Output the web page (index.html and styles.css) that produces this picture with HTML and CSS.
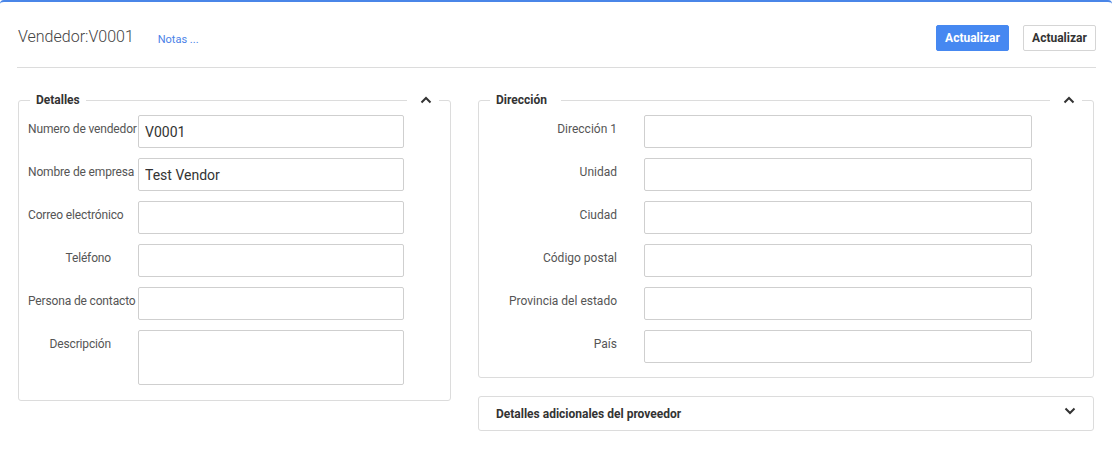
FILE: index.html
```html
<!DOCTYPE html>
<html lang="es">
<head>
<meta charset="utf-8">
<title>Vendedor</title>
<link rel="stylesheet" href="styles.css">
</head>
<body>
<div class="panel">
  <header class="header">
    <h1 class="title">Vendedor:V0001</h1>
    <a class="notes" href="#">Notas ...</a>
    <div class="actions">
      <button class="btn btn-primary">Actualizar</button>
      <button class="btn btn-default">Actualizar</button>
    </div>
  </header>
  <div class="columns">
    <fieldset class="group group-left">
      <legend class="legend">
        <span class="legend-title">Detalles</span>
        <span class="legend-line"></span>
        <span class="chev"><svg width="12" height="8" viewBox="0 0 12 8"><path d="M1.5 6.5 L6 2 L10.5 6.5" fill="none" stroke="#333" stroke-width="2"/></svg></span>
      </legend>
      <div class="form form-left">
        <label class="lbl">Numero de vendedor</label><input class="inp" value="V0001">
        <label class="lbl">Nombre de empresa</label><input class="inp" value="Test Vendor">
        <label class="lbl">Correo electrónico</label><input class="inp">
        <label class="lbl">Teléfono</label><input class="inp">
        <label class="lbl">Persona de contacto</label><input class="inp">
        <label class="lbl">Descripción</label><textarea class="inp area"></textarea>
      </div>
    </fieldset>
    <div class="right">
      <fieldset class="group group-right">
        <legend class="legend">
          <span class="legend-title">Dirección</span>
          <span class="legend-line"></span>
          <span class="chev"><svg width="12" height="8" viewBox="0 0 12 8"><path d="M1.5 6.5 L6 2 L10.5 6.5" fill="none" stroke="#333" stroke-width="2"/></svg></span>
        </legend>
        <div class="form form-right">
          <label class="lbl-r">Dirección 1</label><input class="inp">
          <label class="lbl-r">Unidad</label><input class="inp">
          <label class="lbl-r">Ciudad</label><input class="inp">
          <label class="lbl-r">Código postal</label><input class="inp">
          <label class="lbl-r">Provincia del estado</label><input class="inp">
          <label class="lbl-r">País</label><input class="inp">
        </div>
      </fieldset>
      <div class="collapsed">
        <span class="collapsed-title">Detalles adicionales del proveedor</span>
        <span class="chev-down"><svg width="12" height="8" viewBox="0 0 12 8"><path d="M1.5 1.5 L6 6 L10.5 1.5" fill="none" stroke="#333" stroke-width="2"/></svg></span>
      </div>
    </div>
  </div>
</div>
</body>
</html>
```
FILE: styles.css
```css
* { box-sizing: border-box; }
html, body { margin: 0; padding: 0; background: #fff; }
body {
  font-family: Roboto, "Liberation Sans", Arial, sans-serif;
  color: #555;
  font-size: 12px;
}
.panel {
  width: 1112px;
  height: 448px;
  border-top: 2px solid #4a86e8;
  border-radius: 4px;
}
.header {
  display: flex;
  align-items: center;
  margin: 0 16px 0 17px;
  padding: 23px 0 16px 1px;
  border-bottom: 1px solid #dcdcdc;
}
.title {
  margin: 0 0 3px 0;
  font-size: 16px;
  font-weight: 300;
  color: #444;
  line-height: 20px;
}
.notes {
  margin-left: 24px;
  font-size: 11px;
  color: #4a7fe8;
  text-decoration: none;
  margin-top: 2px;
}
.actions {
  margin-left: auto;
  display: flex;
  gap: 14px;
}
.btn {
  height: 26px;
  width: 73px;
  padding: 0;
  font-family: Roboto, "Liberation Sans", Arial, sans-serif;
  font-size: 12px;
  font-weight: 700;
  border-radius: 2px;
  cursor: pointer;
}
.btn-primary {
  background: #4688f1;
  border: 1px solid #4688f1;
  color: #fff;
}
.btn-default {
  background: #fff;
  border: 1px solid #d5d5d5;
  color: #333;
}
.columns {
  display: grid;
  grid-template-columns: 433px 616px;
  column-gap: 27px;
  margin: 24px 0 0 18px;
  align-items: start;
}
.group {
  margin: 0;
  padding: 0;
  border: 1px solid #dcdcdc;
  border-radius: 3px;
  min-width: 0;
}
.legend {
  display: flex;
  align-items: center;
  height: 16px;
  padding: 0;
  margin-left: 11px;
  width: calc(100% - 22px);
}
.legend-title {
  padding-left: 6px;
  font-weight: 700;
  color: #333;
  font-size: 12px;
  line-height: 16px;
  white-space: nowrap;
}
.legend-line {
  flex: 1;
  height: 1px;
  background: #dcdcdc;
  margin: 0 6px;
}
.group-right .legend-line { margin-left: 14px; }
.chev {
  display: flex;
  padding: 0 7px;
  height: 16px;
  align-items: center;
}
.form {
  display: grid;
  row-gap: 10px;
  column-gap: 27px;
  padding-top: 7px;
}
.form-left {
  grid-template-columns: 83px 266px;
  padding-left: 9px;
  padding-bottom: 15px;
}
.form-right {
  grid-template-columns: 138px 388px;
  padding-bottom: 14px;
}
.lbl {
  text-align: right;
  padding-top: 6px;
  line-height: 16px;
  white-space: nowrap;
  color: #555;
  letter-spacing: -0.15px;
}
.lbl-r {
  text-align: right;
  padding-top: 6px;
  line-height: 16px;
  white-space: nowrap;
  color: #555;
}
.inp {
  display: block;
  height: 33px;
  width: 100%;
  margin: 0;
  border: 1px solid #cfcfcf;
  border-radius: 2px;
  padding: 0 6px;
  font-family: Roboto, "Liberation Sans", Arial, sans-serif;
  font-size: 14px;
  color: #333;
  background: #fff;
  outline: none;
}
.area {
  height: 55px;
  resize: none;
}
.collapsed {
  margin-top: 18px;
  height: 35px;
  border: 1px solid #dcdcdc;
  border-radius: 3px;
  display: flex;
  align-items: center;
  padding: 0 17px 0 17px;
}
.collapsed-title {
  font-weight: 700;
  color: #333;
  font-size: 12px;
  white-space: nowrap;
}
.chev-down {
  margin-left: auto;
  display: flex;
  margin-top: -5px;
}
```
